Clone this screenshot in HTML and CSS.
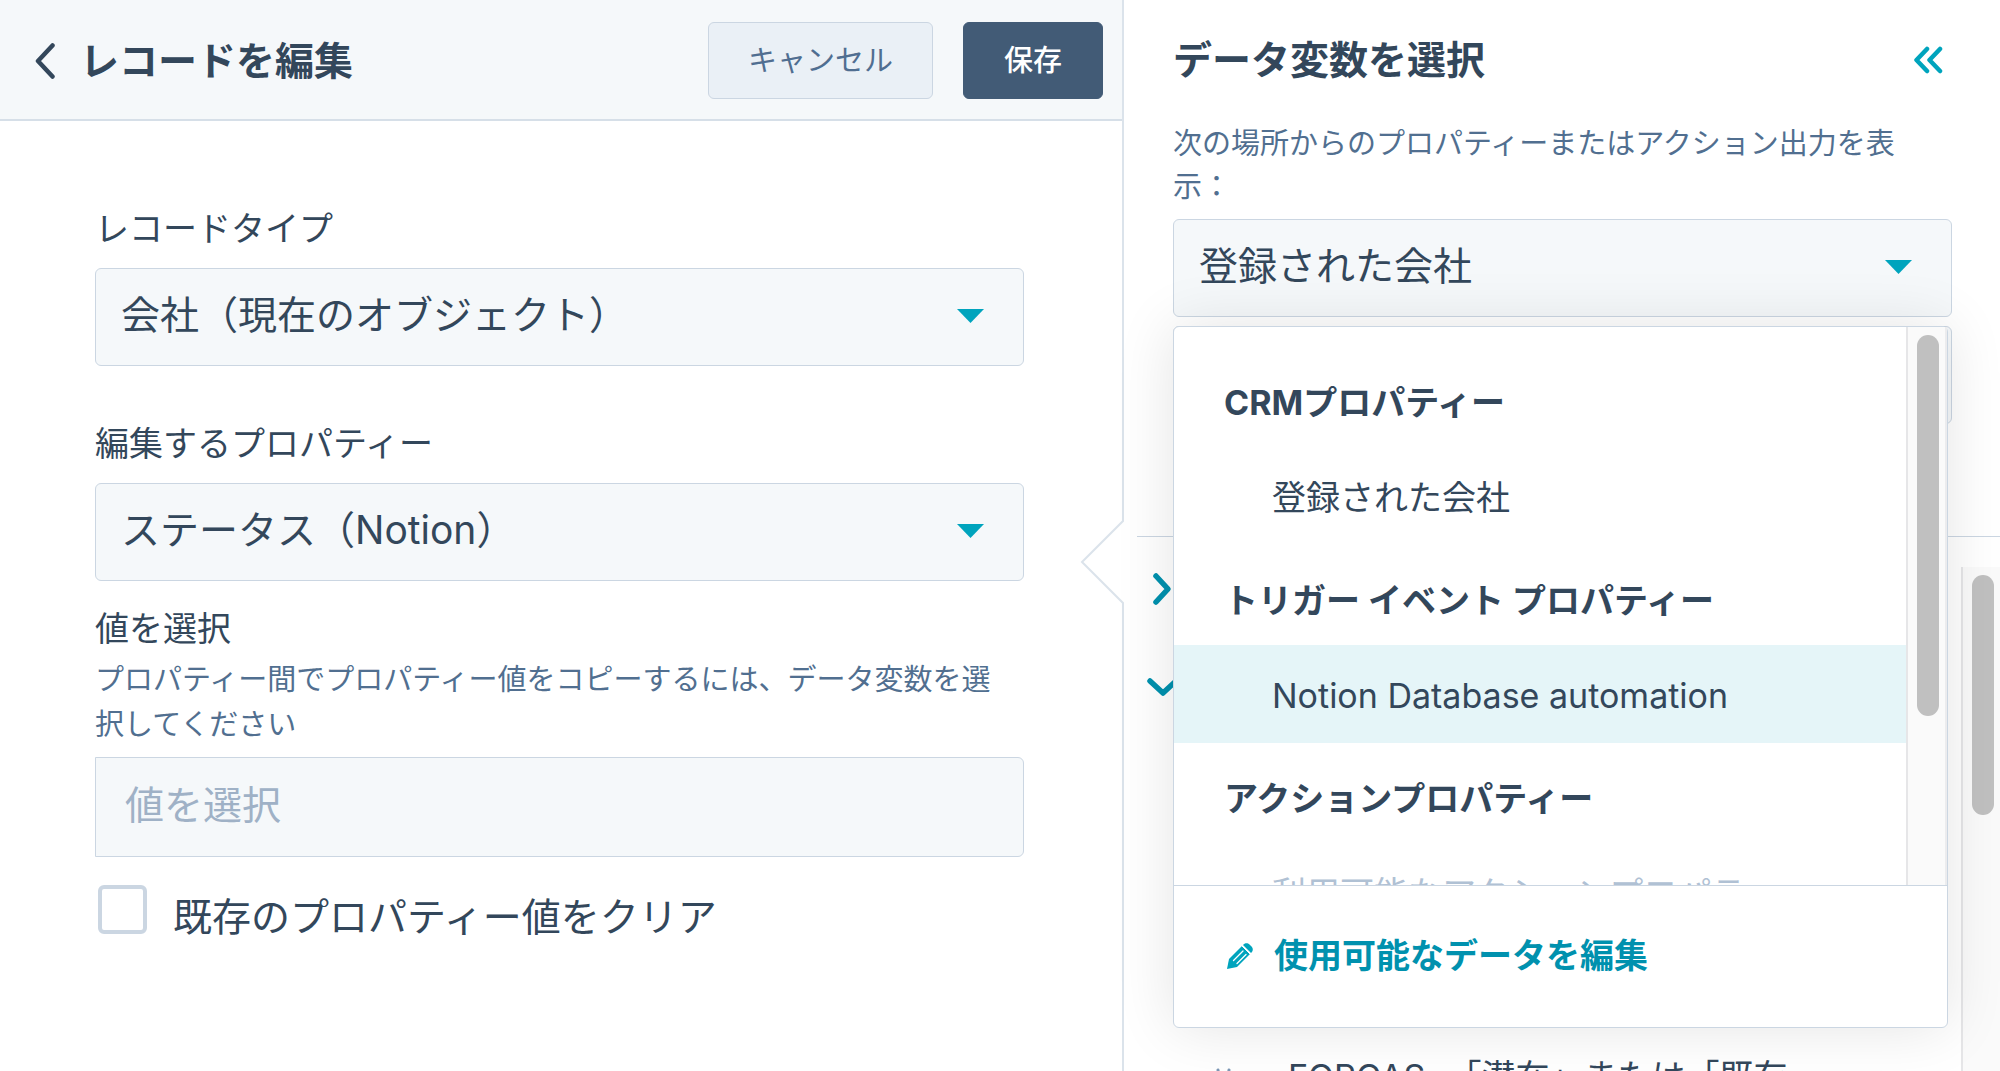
FILE: index.html
```html
<!DOCTYPE html>
<html lang="ja">
<head>
<meta charset="utf-8">
<title>レコードを編集</title>
<link rel="stylesheet" href="styles.css">
</head>
<body>
<div class="layout">
  <main class="editor">
    <header class="editor-header">
      <button class="icon-button back" type="button" aria-label="戻る">
        <svg width="20" height="36" viewBox="0 0 20 36"><path d="M17.500 2.500L3 18l14.500 15.500" fill="none" stroke="#33475b" stroke-width="4.500" stroke-linecap="round" stroke-linejoin="round"/></svg>
      </button>
      <h1 class="title">レコードを編集</h1>
      <button class="button button-cancel" type="button">キャンセル</button>
      <button class="button button-save" type="button">保存</button>
    </header>
    <form class="form">
      <label class="label" for="record-type">レコードタイプ</label>
      <div class="select">
        <select class="control" id="record-type"><option>会社（現在のオブジェクト）</option></select>
        <svg class="caret" width="27" height="14" viewBox="0 0 27 14"><path d="M0 0h27L13.500 14z" fill="#00a4bd"/></svg>
      </div>
      <label class="label label-property" for="property">編集するプロパティー</label>
      <div class="select">
        <select class="control" id="property"><option>ステータス（Notion）</option></select>
        <svg class="caret" width="27" height="14" viewBox="0 0 27 14"><path d="M0 0h27L13.500 14z" fill="#00a4bd"/></svg>
      </div>
      <label class="label label-value" for="value">値を選択</label>
      <p class="help">プロパティー間でプロパティー値をコピーするには、データ変数を選択してください</p>
      <input class="control value-input" id="value" type="text" placeholder="値を選択">
      <label class="check"><input class="checkbox" type="checkbox"><span>既存のプロパティー値をクリア</span></label>
    </form>
  </main>

  <aside class="panel">
    <svg class="notch" width="44" height="84" viewBox="0 0 44 84"><path d="M44 0L2 42l42 42z" fill="#fff"/><path d="M43 0v1L2 42l41 41v1" fill="none" stroke="#dbe3eb" stroke-width="2"/></svg>
    <div class="panel-top">
      <div class="panel-header">
        <h2 class="title">データ変数を選択</h2>
        <button class="icon-button" type="button" aria-label="折りたたむ">
          <svg width="30" height="28" viewBox="0 0 30 28"><path d="M14 3L3.500 14 14 25M27 3L16.500 14 27 25" fill="none" stroke="#00a4bd" stroke-width="4.500" stroke-linecap="round" stroke-linejoin="round"/></svg>
        </button>
      </div>
      <label class="panel-help" for="source">次の場所からのプロパティーまたはアクション出力を表示：</label>
      <div class="sources">
        <div class="select">
          <select class="control" id="source"><option>登録された会社</option></select>
          <svg class="caret" width="27" height="14" viewBox="0 0 27 14"><path d="M0 0h27L13.500 14z" fill="#00a4bd"/></svg>
        </div>
        <input class="control" type="search" aria-label="検索">
        <div class="menu">
          <div class="menu-body">
            <ul class="menu-list">
              <li class="menu-heading">CRMプロパティー</li>
              <li class="menu-item">登録された会社</li>
              <li class="menu-heading">トリガー イベント プロパティー</li>
              <li class="menu-item menu-item-active">Notion Database automation</li>
              <li class="menu-heading">アクションプロパティー</li>
              <li class="menu-item menu-item-disabled">利用可能なアクションプロパティー</li>
            </ul>
            <div class="track menu-track"><div class="thumb menu-thumb"></div></div>
          </div>
          <div class="menu-footer">
            <a class="edit-link" href="#">
              <svg width="28" height="28" viewBox="0 0 28 28"><path d="M1 27l2-10L16 4l8 8-13 13z" fill="#00a4bd"/><path d="M17.500 2.500c2-2 4.500-1.500 6 0l2 2c1.500 1.500 2 4 0 6L25 11l-8-8z" fill="#00a4bd"/><path d="M7.500 18.500L17 9M11 21.500l9-9" stroke="#fff" stroke-width="1.300" stroke-linecap="round"/><path d="M16 4l8 8" stroke="#fff" stroke-width="1"/></svg>
              <span>使用可能なデータを編集</span>
            </a>
          </div>
        </div>
      </div>
    </div>
    <div class="browser">
      <div class="groups">
        <button class="icon-button group" type="button" aria-label="開く">
          <svg width="30" height="34" viewBox="0 0 30 34"><path d="M9 4l12 13L9 30" fill="none" stroke="#0091ae" stroke-width="5.500" stroke-linecap="round" stroke-linejoin="round"/></svg>
        </button>
        <button class="icon-button group" type="button" aria-label="閉じる">
          <svg width="30" height="34" viewBox="0 0 30 34"><path d="M3 11l13 12 13-12" fill="none" stroke="#0091ae" stroke-width="5.500" stroke-linecap="round" stroke-linejoin="round"/></svg>
        </button>
        <div class="property">
          <svg width="18" height="20" viewBox="0 0 18 20"><path d="M3 3l1 7M14 3l-1 7" stroke="#7c98b6" stroke-width="3" stroke-linecap="round"/></svg>
          <span class="property-name">FORCAS</span>
          <span>「潜在」または「既存</span>
        </div>
      </div>
      <div class="track browser-track"><div class="thumb browser-thumb"></div></div>
    </div>
  </aside>
</div>
</body>
</html>
```
FILE: styles.css
```css
* {
  box-sizing: border-box;
}

body {
  margin: 0;
  background: #fff;
  color: #33475b;
  font-family: Inter, "Noto Sans CJK JP", sans-serif;
  font-size: 34px;
}

button,
input,
select {
  font-family: inherit;
  color: inherit;
}

.layout {
  display: grid;
  grid-template-columns: 1122fr 878fr;
  height: 100vh;
  overflow: hidden;
}

.icon-button {
  display: flex;
  padding: 0;
  border: 0;
  background: none;
}

.title {
  margin: 0;
  font-size: 39px;
  line-height: 60px;
  font-weight: 700;
}

/* Record editor */

.editor-header {
  display: flex;
  align-items: center;
  height: 121px;
  padding: 2px 19px 0 35px;
  border-bottom: 2px solid #d6dfe8;
  background: #f5f8fa;
}

.editor-header .title {
  flex: 1;
}

.back {
  margin-right: 25px;
}

.button {
  height: 77px;
  border: 1px solid #cbd6e2;
  border-radius: 6px;
  font-size: 29px;
}

.button-cancel {
  padding: 0 39px 6px;
  margin-right: 30px;
  background: #eaf0f6;
  color: #506e91;
}

.button-save {
  padding: 0 40px 6px;
  border-color: #425b76;
  background: #425b76;
  color: #fff;
  font-weight: 500;
}

.form {
  display: flex;
  flex-direction: column;
  padding: 84px 98px 0 95px;
}

.label {
  margin-bottom: 15px;
  line-height: 48px;
}

.label-property {
  margin-top: 54px;
}

.label-value {
  margin-top: 24px;
  margin-bottom: 4px;
}

.help {
  margin: 0 0 10px;
  padding-right: 16px;
  font-size: 29px;
  line-height: 45px;
  color: #516f90;
}

.select {
  position: relative;
}

.control {
  display: block;
  width: 100%;
  height: 98px;
  padding: 0 80px 6px 25px;
  border: 1px solid #cbd6e2;
  border-radius: 6px;
  background: #f5f8fa;
  font-size: 39px;
  appearance: none;
}

.caret {
  position: absolute;
  top: 41px;
  right: 40px;
}

.value-input {
  height: 100px;
  padding-left: 29px;
  border-radius: 0 6px 6px 0;
}

.value-input::placeholder {
  color: #9fb1c6;
  opacity: 1;
}

.check {
  display: flex;
  align-items: center;
  gap: 26px;
  margin-top: 28px;
  padding-left: 3px;
  font-size: 39px;
  line-height: 62px;
}

.checkbox {
  width: 49px;
  height: 49px;
  margin: 0 0 14px;
  border: 4px solid #cbd6e2;
  border-radius: 6px;
  background: #fff;
  appearance: none;
}

/* Data variable panel */

.panel {
  position: relative;
  display: flex;
  flex-direction: column;
  min-height: 0;
  border-left: 2px solid #dbe3eb;
}

.notch {
  position: absolute;
  top: 520px;
  left: -44px;
}

.panel-top {
  padding: 30px 48px 0 49px;
}

.panel-header {
  display: flex;
  align-items: center;
  justify-content: space-between;
  padding-right: 9px;
}

.panel-help {
  display: block;
  margin: 32px 0 11px;
  font-size: 29px;
  line-height: 43px;
  color: #516f90;
}

.sources {
  position: relative;
  display: flex;
  flex-direction: column;
  gap: 9px;
}

.menu {
  position: absolute;
  z-index: 1;
  top: 107px;
  left: 0;
  right: 4px;
  border: 1px solid #cbd6e2;
  border-radius: 6px;
  background: #fff;
  box-shadow: 0 0 60px rgba(0, 0, 0, 0.11);
}

.menu-body {
  display: flex;
  height: 558px;
  overflow: hidden;
}

.menu-list {
  flex: 1;
  margin: 0;
  padding: 20px 0 0;
  list-style: none;
}

.menu-heading {
  height: 100px;
  padding: 10px 0 0 50px;
  line-height: 92px;
  font-weight: 700;
}

.menu-item {
  height: 98px;
  padding: 2px 0 0 98px;
  line-height: 98px;
}

.menu-item-active {
  background: #e5f5f8;
}

.menu-item-disabled {
  color: #b0c1d4;
}

.track {
  flex: none;
  border-left: 2px solid #e6e6e8;
  background: #fafafa;
}

.thumb {
  width: 22px;
  margin: 8px 0 0 9px;
  border-radius: 11px;
  background: #c0c0c0;
}

.menu-track {
  width: 41px;
  border-right: 2px solid #ececee;
}

.menu-thumb {
  height: 381px;
}

.menu-footer {
  padding: 39px 50px 41px;
  border-top: 1px solid #cbd6e2;
}

.edit-link {
  display: flex;
  align-items: center;
  gap: 20px;
  padding-left: 2px;
  line-height: 61px;
  font-weight: 700;
  color: #0091ae;
  text-decoration: none;
}

.browser {
  display: flex;
  flex: 1;
  min-height: 0;
  margin: 112px 0 0 13px;
  border-top: 1px solid #cbd6e2;
  overflow: hidden;
}

.groups {
  flex: 1;
  padding-top: 3px;
}

.group {
  align-items: center;
  height: 98px;
  padding-left: 10px;
}

.property {
  display: flex;
  align-items: center;
  margin-top: 292px;
  padding-left: 78px;
  line-height: 98px;
}

.property-name {
  margin: 0 22px 0 55px;
}

.browser-track {
  width: 39px;
  margin-top: 30px;
}

.browser-thumb {
  height: 240px;
}
```
